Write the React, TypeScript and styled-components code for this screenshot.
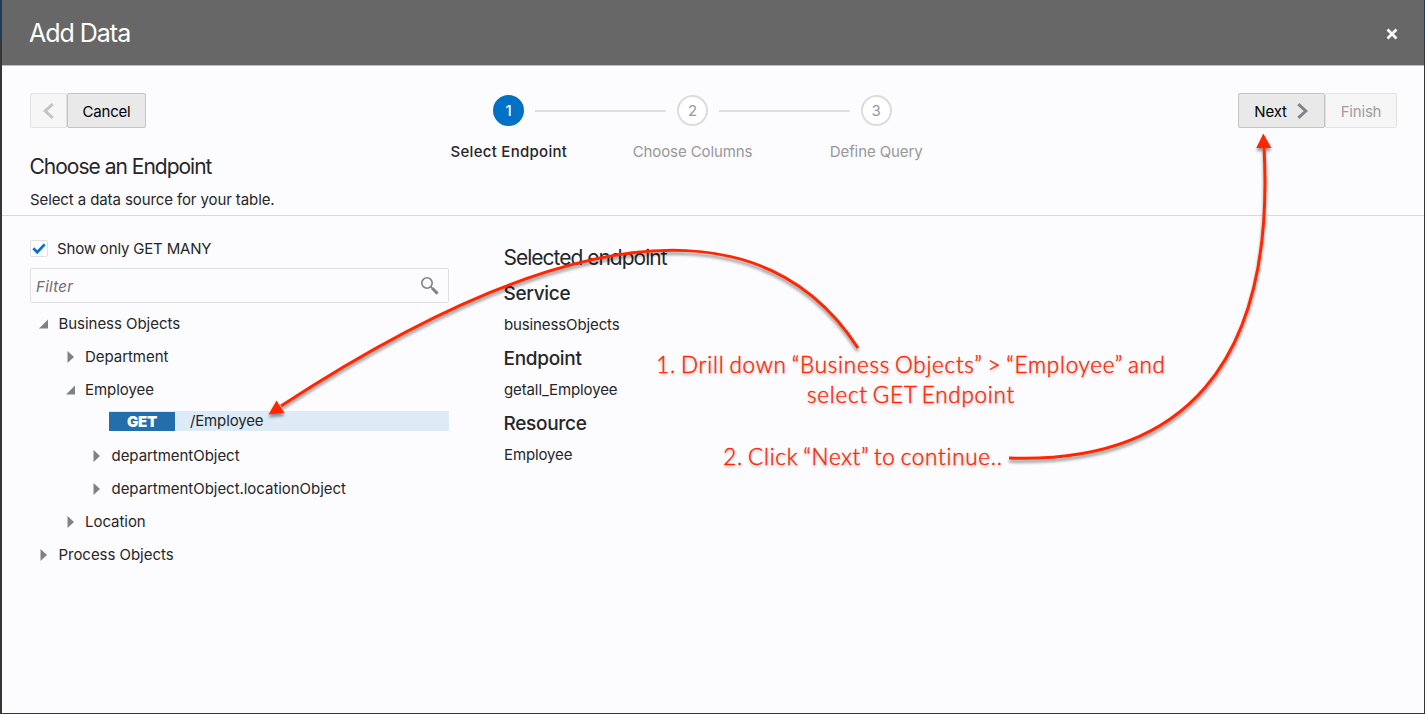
import React from 'react';
import styled, { createGlobalStyle, css } from 'styled-components';

const GlobalStyle = createGlobalStyle`
  *, *::before, *::after { box-sizing: border-box; }
  body {
    margin: 0;
    overflow: hidden;
    font-family: Inter, "Liberation Sans", sans-serif;
    font-size: 15px;
    letter-spacing: -0.1px;
    color: #26262a;
  }
  h1, h2, h3, p, ul { margin: 0; padding: 0; font-weight: 400; }
`;

const Backdrop = styled.div`
  position: relative;
  display: flex;
  width: 1425px;
  height: 714px;
  padding: 0 1px 1px 2px;
  background: linear-gradient(#1d3e5a 0 40px, #353537 40px 100%);
`;

const Dialog = styled.section`
  display: flex;
  flex-direction: column;
  flex: 1;
  background: #fcfcfe;
`;

const Header = styled.header`
  display: flex;
  align-items: center;
  justify-content: space-between;
  height: 66px;
  padding: 0 26px 0 27px;
  background: #676767;
  border-bottom: 1px solid #bcbcc0;
`;

const Title = styled.h1`
  font-size: 25px;
  line-height: 32px;
  letter-spacing: -1.02px;
  color: #fff;
`;

const CloseButton = styled.button`
  display: flex;
  padding: 0;
  margin-top: 2px;
  border: 0;
  background: none;
`;

const Intro = styled.div`
  display: flex;
  justify-content: space-between;
  height: 150px;
  padding: 27px 27px 0 28px;
  border-bottom: 1px solid #dadadd;
`;

const IntroText = styled.div`
  width: 387px;
`;

const ButtonGroup = styled.div`
  display: flex;
`;

const Button = styled.button<{ $width: number }>`
  display: flex;
  align-items: center;
  justify-content: center;
  width: ${(p) => p.$width}px;
  height: 35px;
  padding: 2px 0 0;
  border: 1px solid #c2c3c6;
  border-radius: 2px;
  background: #e9e9ea;
  color: #000;
  font: inherit;
  letter-spacing: -0.2px;
  svg { margin-top: -2px; }
  &:disabled {
    border-color: #e2e2e4;
    background: #f6f6f7;
    color: #9d9da0;
  }
`;

const NextIcon = styled.svg`
  margin: 0 1px 0 10px;
`;

const Heading = styled.h2<{ $spaced?: boolean }>`
  margin-left: -0.5px;
  font-size: 21px;
  font-weight: 380;
  line-height: 28px;
  letter-spacing: -1px;
  ${(p) => p.$spaced && css`margin-top: 25px;`}
`;

const Lead = styled.p`
  margin-top: 9px;
  line-height: 20px;
`;

const Stepper = styled.ol`
  display: flex;
  width: 551px;
  margin: 0 270px 0 0;
  padding: 0;
  list-style: none;
`;

const StepItem = styled.li<{ $active?: boolean }>`
  display: flex;
  flex-direction: column;
  align-items: center;
  flex: 1;
  padding-top: 2px;
  font-weight: ${(p) => (p.$active ? 500 : 400)};
  letter-spacing: ${(p) => (p.$active ? 0.28 : -0.1)}px;
  color: ${(p) => (p.$active ? '#26262a' : '#97979b')};
`;

const StepTrack = styled.div`
  display: grid;
  grid-template-columns: 1fr 31px 1fr;
  column-gap: 11px;
  align-items: center;
  width: 100%;
`;

const StepLine = styled.span<{ $hidden?: boolean }>`
  height: 2px;
  background: ${(p) => (p.$hidden ? 'transparent' : '#dfdfe1')};
`;

const StepCircle = styled.span<{ $active?: boolean }>`
  display: flex;
  align-items: center;
  justify-content: center;
  height: 31px;
  border: 2px solid ${(p) => (p.$active ? '#0071c5' : '#dcdcde')};
  border-radius: 50%;
  background: ${(p) => (p.$active ? '#0071c5' : '#fff')};
  color: ${(p) => (p.$active ? '#fff' : '#97979b')};
`;

const StepLabel = styled.span`
  margin-top: 16px;
  line-height: 20px;
`;

const Content = styled.main`
  display: grid;
  grid-template-columns: 419px 1fr;
  column-gap: 55px;
  padding: 22px 28px 0;
`;

const CheckLabel = styled.label`
  display: flex;
  align-items: center;
  gap: 9px;
  height: 20px;
  letter-spacing: -0.17px;
`;

const CheckBox = styled.span`
  display: flex;
  width: 18px;
  height: 17px;
  border: 1px solid #e0e0e3;
  border-radius: 2px;
  background: #fff;
`;

const FilterBox = styled.div`
  display: flex;
  align-items: center;
  justify-content: space-between;
  height: 35px;
  margin-top: 10px;
  padding: 2px 9px 0 5px;
  border: 1px solid #dfdfe2;
  border-radius: 2px;
  font-style: italic;
  letter-spacing: 0.3px;
  color: #6c6c70;
  svg { margin-top: -3px; }
`;

const Tree = styled.ul`
  display: flex;
  flex-direction: column;
  margin-top: 4px;
  list-style: none;
`;

const TreeRow = styled.li<{ $level: number }>`
  display: flex;
  align-items: center;
  height: 33px;
  padding-left: ${(p) => 8 + p.$level * 26.5}px;
  letter-spacing: -0.04px;
  svg { margin-right: 9.5px; }
`;

const EndpointRow = styled.li`
  display: flex;
  align-items: flex-end;
  height: 20px;
  margin: 5px 0 8px 79px;
  background: #ddebf6;
  letter-spacing: -0.15px;
`;

const Method = styled.span`
  width: 66px;
  height: 19px;
  line-height: 20px;
  background: #226fab;
  color: #fff;
  font-weight: 900;
  letter-spacing: -0.2px;
  text-align: center;
`;

const Path = styled.span`
  padding-left: 15px;
  line-height: 20px;
`;

const Details = styled.div`
  display: flex;
  flex-direction: column;
  padding-top: 6px;
`;

const Group = styled.div`
  height: 65px;
  padding-top: 8px;
`;

const GroupTitle = styled.h3`
  margin-left: -0.5px;
  font-size: 19px;
  font-weight: 450;
  line-height: 28px;
  letter-spacing: -0.3px;
`;

const GroupValue = styled.p`
  margin-top: 7px;
  line-height: 20px;
  letter-spacing: -0.12px;
`;

const Annotations = styled.svg`
  position: absolute;
  inset: 0;
  pointer-events: none;
`;

const Note = styled.p<{ $x: number; $y: number; $width: number }>`
  position: absolute;
  left: ${(p) => p.$x}px;
  top: ${(p) => p.$y}px;
  width: ${(p) => p.$width}px;
  font-family: Lato, "Liberation Sans", sans-serif;
  font-size: 22.5px;
  font-weight: 300;
  -webkit-text-stroke: 0.4px #ff2600;
  line-height: 30px;
  letter-spacing: 0.72px;
  word-spacing: -1.8px;
  text-align: center;
  white-space: nowrap;
  color: #ff2600;
  text-shadow: 0 2px 3px rgba(0, 0, 0, 0.3);
`;

const Arrow = styled.path`
  fill: none;
  stroke: #ff2600;
  stroke-width: 3;
`;

const ArrowHead = styled.path`
  fill: #ff2600;
`;

function Toggle({ open }: { open?: boolean }) {
  return (
    <svg width="11" height="12" viewBox="0 0 11 12">
      <path d={open ? 'M10 1.5V10.5H1Z' : 'M2.5 0V12L9 6Z'} fill="#7f8284" />
    </svg>
  );
}

type Step = { label: string; active?: boolean };
const steps: Step[] = [
  { label: 'Select Endpoint', active: true },
  { label: 'Choose Columns' },
  { label: 'Define Query' },
];

const details = [
  ['Service', 'businessObjects'],
  ['Endpoint', 'getall_Employee'],
  ['Resource', 'Employee'],
];

export default function App() {
  return (
    <>
      <GlobalStyle />
      <Backdrop>
        <Dialog>
          <Header>
            <Title>Add Data</Title>
            <CloseButton aria-label="Close">
              <svg width="12" height="12" viewBox="0 0 12 12">
                <path d="M1.5 1.5L10.5 10.5M10.5 1.5L1.5 10.5" stroke="#fff" strokeWidth="2.7" />
              </svg>
            </CloseButton>
          </Header>

          <Intro>
            <IntroText>
              <ButtonGroup>
                <Button $width={37} disabled aria-label="Back">
                  <svg width="11" height="16" viewBox="0 0 11 16">
                    <path d="M9.7 1.2L2.2 8L9.7 14.8" fill="none" stroke="#c3c4c6" strokeWidth="3" />
                  </svg>
                </Button>
                <Button $width={79}>Cancel</Button>
              </ButtonGroup>
              <Heading $spaced>Choose an Endpoint</Heading>
              <Lead>Select a data source for your table.</Lead>
            </IntroText>

            <Stepper>
              {steps.map((step, i) => (
                <StepItem key={step.label} $active={step.active}>
                  <StepTrack>
                    <StepLine $hidden={i === 0} />
                    <StepCircle $active={step.active}>{i + 1}</StepCircle>
                    <StepLine $hidden={i === steps.length - 1} />
                  </StepTrack>
                  <StepLabel>{step.label}</StepLabel>
                </StepItem>
              ))}
            </Stepper>

            <ButtonGroup>
              <Button $width={87}>
                Next
                <NextIcon width="11" height="16" viewBox="0 0 11 16">
                  <path d="M1.3 1.2L8.8 8L1.3 14.8" fill="none" stroke="#818486" strokeWidth="3" />
                </NextIcon>
              </Button>
              <Button $width={72} disabled>Finish</Button>
            </ButtonGroup>
          </Intro>

          <Content>
            <div>
              <CheckLabel>
                <CheckBox>
                  <svg width="16" height="15" viewBox="0 0 16 15">
                    <path d="M2.3 7.3L6.2 11.2L13.7 3.4" fill="none" stroke="#0572ce" strokeWidth="2.7" />
                  </svg>
                </CheckBox>
                Show only GET MANY
              </CheckLabel>
              <FilterBox>
                Filter
                <svg width="19" height="19" viewBox="0 0 19 19">
                  <circle cx="7" cy="7" r="5.2" fill="none" stroke="#7f8284" strokeWidth="1.6" />
                  <path d="M10.7 10.7L12.2 12.2" stroke="#7f8284" strokeWidth="1.5" />
                  <path d="M12 12L17.6 17.6" stroke="#7f8284" strokeWidth="3" />
                </svg>
              </FilterBox>
              <Tree>
                <TreeRow $level={0}><Toggle open />Business Objects</TreeRow>
                <TreeRow $level={1}><Toggle />Department</TreeRow>
                <TreeRow $level={1}><Toggle open />Employee</TreeRow>
                <EndpointRow>
                  <Method>GET</Method>
                  <Path>/Employee</Path>
                </EndpointRow>
                <TreeRow $level={2}><Toggle />departmentObject</TreeRow>
                <TreeRow $level={2}><Toggle />departmentObject.locationObject</TreeRow>
                <TreeRow $level={1}><Toggle />Location</TreeRow>
                <TreeRow $level={0}><Toggle />Process Objects</TreeRow>
              </Tree>
            </div>

            <Details>
              <Heading>Selected endpoint</Heading>
              {details.map(([title, value]) => (
                <Group key={title}>
                  <GroupTitle>{title}</GroupTitle>
                  <GroupValue>{value}</GroupValue>
                </Group>
              ))}
            </Details>
          </Content>
        </Dialog>

        <Annotations width="1425" height="714" viewBox="0 0 1425 714">
          <defs>
            <filter id="shadow" filterUnits="userSpaceOnUse" x="0" y="0" width="1425" height="714">
              <feDropShadow dx="0" dy="3" stdDeviation="1.5" floodColor="#000" floodOpacity="0.4" />
            </filter>
          </defs>
          <g filter="url(#shadow)">
            <Arrow d="M858 348C797 254 653 163 281 406" />
            <ArrowHead d="M268.5 414.5L276.5 400.5L284.5 413Z" />
            <Arrow d="M1009 458C1180 464 1276 368 1264 146" />
            <ArrowHead d="M1263.3 133.5L1256.3 148H1271.3Z" />
          </g>
        </Annotations>
        <Note $x={653} $y={350} $width={516}>
          1. Drill down “Business Objects” &gt; “Employee” and<br />select GET Endpoint
        </Note>
        <Note $x={722} $y={442} $width={282}>2. Click “Next” to continue..</Note>
      </Backdrop>
    </>
  );
}
